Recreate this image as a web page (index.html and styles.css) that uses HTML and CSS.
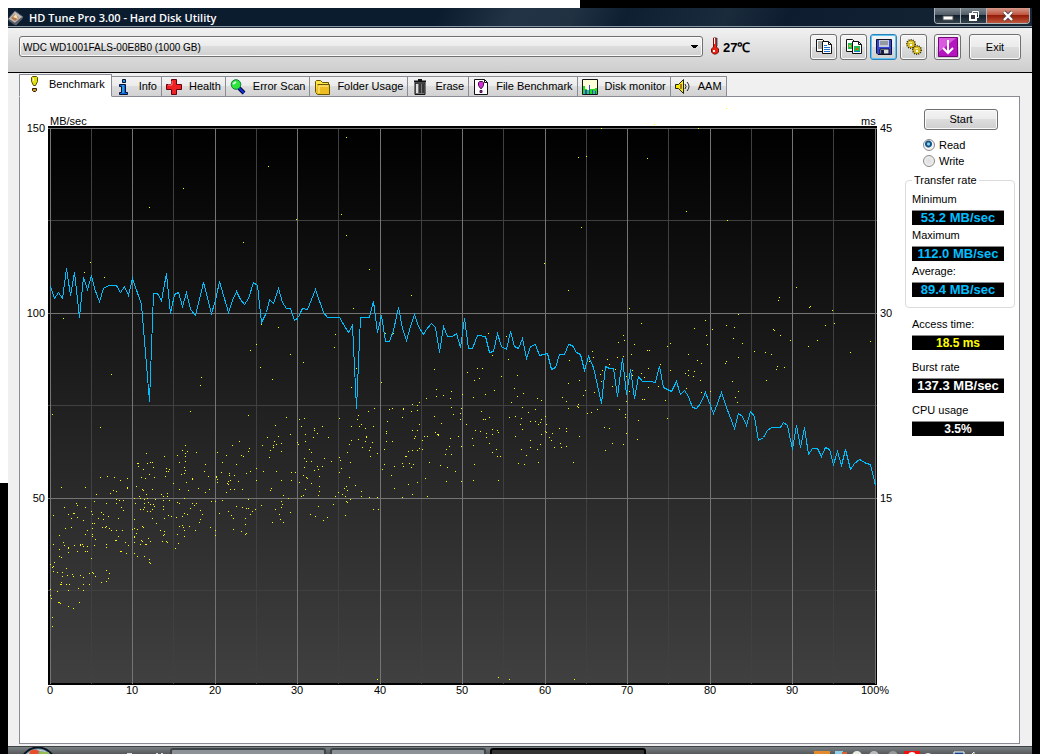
FILE: index.html
```html
<!DOCTYPE html>
<html lang="en">
<head>
<meta charset="utf-8">
<title>HD Tune Pro 3.00 - Hard Disk Utility</title>
<link rel="stylesheet" href="styles.css">
</head>
<body>
<main class="window">
  <header class="titlebar">
    <svg class="app-icon" viewBox="0 0 16 16" aria-hidden="true"><path d="M0 9 7 1 15 7 8 15z" fill="#bcb9bb" stroke="#5c5d67"/><path d="M3 8 7 4 11 8 7 11z" fill="#b47849"/><path d="M5 7 8 4 10 9z" fill="#f7e0b0"/><path d="M1 10 7 14 14 8" fill="none" stroke="#595b64" stroke-width="2"/></svg>
    <h1 class="title">HD Tune Pro 3.00 - Hard Disk Utility</h1>
    <div class="caption-buttons">
      <button class="caption" aria-label="Minimize"><svg viewBox="0 0 14 12"><path d="M2 6h10v4H2z" fill="#fff" stroke="#555"/></svg></button>
      <button class="caption" aria-label="Restore"><svg viewBox="0 0 14 12"><path d="M5.500 1.500h6v6h-6z" fill="none" stroke="#fff"/><path d="M3 4h6v6H3z" fill="#334" stroke="#fff" stroke-width="2"/><path d="M5 6h2v2H5z" fill="#334"/></svg></button>
      <button class="caption close" aria-label="Close"><svg viewBox="0 0 14 12"><path d="M3 2l8 8M11 2l-8 8" stroke="#514047" stroke-width="4"/><path d="M3 2l8 8M11 2l-8 8" stroke="#fff" stroke-width="2.4"/></svg></button>
    </div>
  </header>

  <div class="toolbar">
    <select class="drive" aria-label="Drive"><option>WDC WD1001FALS-00E8B0 (1000 GB)</option></select>
    <svg class="thermo" viewBox="0 0 10 18" aria-hidden="true"><path d="M3.500 1h3v9l2 2v3l-2 2h-3l-2-2v-3l2-2z" fill="#e21" stroke="#711"/><path d="M4 1h1v6H4z" fill="#fff"/><path d="M6 2h2M6 4h2M6 6h2M6 8h2" stroke="#456"/><path d="M3 13h2v2H3z" fill="#fff"/></svg>
    <output class="temp">27℃</output>
    <div class="tools">
      <button class="tool" aria-label="Copy text"><svg viewBox="0 0 18 18"><path d="M1.500 1.500h6l2 2v10h-8z" fill="#fff" stroke="#111"/><path d="M3 4h4M3 6h4M3 8h4M3 10h4" stroke="#555"/><path d="M7.500 3.500h6l3 3v9h-9z" fill="#fff" stroke="#111"/><path d="M13.500 3.500v3h3" fill="none" stroke="#111"/><path d="M9 7.500h3M9 9.500h6M9 11.500h6M9 13.500h6" stroke="#27c"/></svg></button>
      <button class="tool" aria-label="Copy image"><svg viewBox="0 0 18 18"><path d="M1.500 1.500h6l2 2v10h-8z" fill="#fff" stroke="#111"/><path d="M3 5h5v6H3z" fill="#2b5"/><path d="M4 7h2v2H4z" fill="#ea2"/><path d="M7.500 3.500h6l3 3v9h-9z" fill="#fff" stroke="#111"/><path d="M13.500 3.500v3h3" fill="none" stroke="#111"/><path d="M9 8h6v6H9z" fill="#2b5"/><path d="M11 10h2v2h-2z" fill="#e50"/><path d="M9 13.500h6" stroke="#27c"/></svg></button>
      <button class="tool active" aria-label="Save"><svg viewBox="0 0 18 18"><path d="M1.500 1.500h15v15H3l-1.500-1.500z" fill="#34d" stroke="#112"/><path d="M4 2h10v7H4z" fill="#c6cbd2"/><path d="M5 4h8M5 6h8" stroke="#667"/><path d="M5 11h9v5H5z" fill="#ddd" stroke="#112"/><path d="M6 12h3v4H6z" fill="#124"/></svg></button>
      <button class="tool" aria-label="Options"><svg viewBox="0 0 18 18" stroke="#352c00"><circle cx="6" cy="6" r="4" fill="#c9a90f" stroke-width="2" stroke-dasharray="1 1"/><circle cx="12" cy="12" r="4" fill="#c9a90f" stroke-width="2" stroke-dasharray="1 1"/><circle cx="6" cy="6" r="3.500" fill="#d9bd25" stroke="none"/><circle cx="12" cy="12" r="3.500" fill="#d9bd25" stroke="none"/><path d="M4 4.500h3M10 10.500h3" stroke="#f8ea83"/><path d="M5 6h2v2H5zM11 12h2v2h-2z" fill="#fff" stroke="none"/></svg></button>
      <button class="tool minimize-tray" aria-label="Minimize to tray"><svg viewBox="0 0 20 20"><path d="M.500 .500h19v19H.500z" fill="#b416bd" stroke="#700977"/><path d="M1 1h17L1 15z" fill="#d95adf"/><path d="M10 3v13M5 11l5 5 5-5" fill="none" stroke="#fff" stroke-width="2"/></svg></button>
      <button class="exit">Exit</button>
    </div>
  </div>

  <nav class="tabs" role="tablist">
    <button class="tab selected" role="tab" aria-selected="true"><svg viewBox="0 0 16 16"><path d="M6.500 .500h4l1 1v4l-2 4h-2l-2-4v-4z" fill="#e6de15" stroke="#554f00"/><path d="M7 2h1v3H7z" fill="#fff"/><path d="M6.500 12.500h4v2l-1 1h-2l-1-1z" fill="#c93" stroke="#331b00"/></svg>Benchmark</button>
    <button class="tab" role="tab"><svg viewBox="0 0 16 16"><path d="M6.500 .500h3v3h-3z" fill="#29e" stroke="#013"/><path d="M3.500 5.500h6v8h2v2h-8v-2h2v-6h-2z" fill="#16d" stroke="#013"/><path d="M7 6v8" stroke="#4ce"/></svg>Info</button>
    <button class="tab" role="tab"><svg viewBox="0 0 16 16"><path d="M5.500 .500h5v5h5v5h-5v5h-5v-5h-5v-5h5z" fill="#e22" stroke="#601"/><path d="M6 2v4H2" fill="none" stroke="#f88"/></svg>Health</button>
    <button class="tab" role="tab"><svg viewBox="0 0 16 16"><path d="M9 9l5 5" stroke="#003" stroke-width="4"/><path d="M9 9l5 5" stroke="#13d" stroke-width="2"/><circle cx="6" cy="5.500" r="4.800" fill="#2de53b" stroke="#174"/><path d="M3 5l3-2" stroke="#dfd" stroke-width="2"/></svg>Error Scan</button>
    <button class="tab" role="tab"><svg viewBox="0 0 16 16"><path d="M1.500 13V2.500l1-1h4l2 2h6V13" fill="#ffe64b" stroke="#650"/><path d="M3.500 5.500h12v10h-12l-2-2" fill="#eebd22" stroke="#650"/><path d="M5 7h9M5 7v7" stroke="#fff29a"/></svg>Folder Usage</button>
    <button class="tab" role="tab"><svg viewBox="0 0 16 16"><path d="M3 4h10v11.500H3z" fill="#777" stroke="#111"/><path d="M2 2.500h12M6 .500h4" stroke="#111" stroke-width="2"/><path d="M5 5v9" stroke="#ddd" stroke-width="2"/><path d="M8 5v9M11 5v9" stroke="#222" stroke-width="1.500"/></svg>Erase</button>
    <button class="tab" role="tab"><svg viewBox="0 0 16 16"><path d="M1.500 .500h10l3 3v12h-13z" fill="#fff" stroke="#111"/><path d="M11.500 .500v3h3" fill="none" stroke="#111"/><path d="M6.500 2.500h3l1 1v3l-2 3h-1l-2-3v-3z" fill="#d32bd6" stroke="#414"/><path d="M7 11.500h2v2H7z" fill="#d32bd6" stroke="#414"/></svg>File Benchmark</button>
    <button class="tab" role="tab"><svg viewBox="0 0 16 16"><path d="M.500 .500h15v15H.500z" fill="#ffffd7" stroke="#111"/><path d="M1 15V7h2v3h2v1h2v-1h6v-1h2v6z" fill="#2d2"/><path d="M3 15v-4h2v4zM7 15V6h1v9zM10 15v-4h1v4zM13 15v-3h1v3z" fill="#34e"/></svg>Disk monitor</button>
    <button class="tab" role="tab"><svg viewBox="0 0 16 16"><path d="M.500 5.500h3l5-5v14l-5-5h-3z" fill="#f4e811" stroke="#221"/><path d="M6 5v5" stroke="#a71" stroke-width="2"/><path d="M10 5q2 2.500 0 5M12 3q4 4.500 0 9" fill="none" stroke="#222"/></svg>AAM</button>
  </nav>

  <section class="panel">
    <svg class="chart" viewBox="20 97 885 610" role="img" aria-label="Transfer rate and access time">
      <defs><linearGradient id="fade" x1="0" y1="0" x2="0" y2="1"><stop offset="0" stop-color="#000"/><stop offset="1" stop-color="#404040"/></linearGradient></defs>
      <path class="frame" d="M48 126h829v559H48z"/>
      <path d="M50 128h826v555H50z" fill="url(#fade)"/>
      <path class="grid minor" d="M91.500 128v556M173.500 128v556M256.500 128v556M338.500 128v556M421.500 128v556M503.500 128v556M586.500 128v556M668.500 128v556M751.500 128v556M833.500 128v556M48 220.500h829M48 405.500h829M48 590.500h829"/>
      <path class="grid major" d="M50.500 128v556M132.500 128v556M215.500 128v556M297.500 128v556M380.500 128v556M462.500 128v556M545.500 128v556M627.500 128v556M710.500 128v556M792.500 128v556M875.500 128v556M48 128.500h829M48 313.500h829M48 498.500h829"/>
      <polyline class="rate" id="rate"/>
      <path class="access" id="access"/>
      <g class="axis">
        <text x="50" y="125">MB/sec</text><text x="861" y="125">ms</text>
        <g text-anchor="end"><text x="45" y="132">150</text><text x="45" y="317">100</text><text x="45" y="502">50</text></g>
        <text x="880" y="132">45</text><text x="880" y="317">30</text><text x="880" y="502">15</text>
        <g text-anchor="middle"><text x="50" y="694">0</text><text x="132" y="694">10</text><text x="215" y="694">20</text><text x="297" y="694">30</text><text x="380" y="694">40</text><text x="462" y="694">50</text><text x="545" y="694">60</text><text x="627" y="694">70</text><text x="710" y="694">80</text><text x="792" y="694">90</text><text x="875" y="694">100%</text></g>
      </g>
    </svg>
    <aside class="side">
      <button class="start">Start</button>
      <div class="modes">
        <label><input type="radio" name="mode" checked>Read</label>
        <label><input type="radio" name="mode">Write</label>
      </div>
      <fieldset class="rates">
        <legend>Transfer rate</legend>
        <label for="min">Minimum</label><output id="min" class="value">53.2 MB/sec</output>
        <label for="max">Maximum</label><output id="max" class="value">112.0 MB/sec</output>
        <label for="avg">Average:</label><output id="avg" class="value">89.4 MB/sec</output>
      </fieldset>
      <div class="stats">
        <div class="stat"><label for="acc">Access time:</label><output id="acc" class="value yellow">18.5 ms</output></div>
        <div class="stat"><label for="burst">Burst rate</label><output id="burst" class="value white">137.3 MB/sec</output></div>
        <div class="stat"><label for="cpu">CPU usage</label><output id="cpu" class="value white small">3.5%</output></div>
      </div>
    </aside>
  </section>

  <footer class="taskbar">
    <svg class="orb" viewBox="0 0 38 8" aria-hidden="true"><circle cx="19" cy="18" r="17.500" fill="#7e9bae" stroke="#0a1522" stroke-width="2"/><circle cx="19" cy="19" r="16" fill="none" stroke="#c9d8e0"/><path d="M11 4q5-3 9 0l-1 4h-9z" fill="#e5502a"/><path d="M21 4q5 2 9 1l-1 3h-9z" fill="#94bd4a"/></svg>
    <svg class="quick" viewBox="0 0 48 8" aria-hidden="true"><path d="M9 7h5M38 7h2M43 7h2" stroke="#ddd" stroke-width="2"/></svg>
    <div class="task"></div><div class="task"></div><div class="task current"></div>
    <svg class="tray" viewBox="0 0 166 8" aria-hidden="true"><path d="M0 4h16v4H0z" fill="#e38b2c"/><path d="M21 4h8v4h-8z" fill="#8cd0ec"/><path d="M28 5h5v3h-5z" fill="#d76335"/><circle cx="43" cy="9" r="5" fill="#e8efe1"/><circle cx="60" cy="9" r="5" fill="#bbb"/><circle cx="79" cy="9" r="5" fill="#999"/><path d="M90 4h16v4H90z" fill="#e11"/><circle cx="98" cy="9" r="4" fill="#fff"/><circle cx="114" cy="10" r="4" fill="#ddd"/><path d="M140 5h10v4h-10z" fill="#148" stroke="#fff"/><path d="M157 8l3-3v3" fill="none" stroke="#eee"/></svg>
  </footer>
</main>
<script src="chart.js"></script>
</body>
</html>
```

FILE: styles.css
```css
* { box-sizing: border-box; }
body {
  margin: 0;
  padding: 8px 8px 0;
  min-height: 100vh;
  display: flex;
  background: linear-gradient(#fff, #fff) 0 0 / 580px 8px no-repeat,
    linear-gradient(#fff, #fff) 0 0 / 8px 483px no-repeat, #000;
  font: 11px/13px "Liberation Sans", Arial, sans-serif;
  color: #000;
}
button, select, input { font: inherit; color: inherit; margin: 0; }
svg { display: block; }
.window { flex: 1; min-width: 0; display: flex; flex-direction: column; background: #f0f0f0; }

.titlebar {
  height: 20px;
  display: flex;
  align-items: flex-start;
  padding-right: 2px;
  border-bottom: 1px solid #182838;
  box-shadow: inset 0 -1px #8d98a3;
  background: linear-gradient(115deg, #0c1c2f 42%, #223346 49%, #203142 55%, #0e1f32 60%, #1a2b3c 70%, #0d1d2f 76%, #162636);
}
.app-icon { width: 16px; height: 16px; margin: 2px 5px 0 0; }
.title { flex: 1; margin: 0; font: 600 11px/19px "Open Sans", sans-serif; color: #fff; }
.caption-buttons { display: flex; border: 1px solid #aeb6bd; border-top: 0; border-radius: 0 0 4px 4px; overflow: hidden; }
.caption {
  display: flex; align-items: center; justify-content: center;
  width: 26px; height: 15px; padding: 0; border: 0; border-right: 1px solid #aeb6bd;
  background: linear-gradient(#7d8790, #4d5964 48%, #111e2b 50%, #34424e);
}
.caption svg { width: 14px; height: 12px; }
.caption.close { width: 42px; border-right: 0; background: linear-gradient(#d79a8c, #bd513b 48%, #961d08 50%, #c0563c); }

.toolbar {
  height: 45px;
  display: flex;
  align-items: flex-start;
  padding: 6px 11px 0;
  border-bottom: 1px solid #000;
  background: linear-gradient(#f1f1f1, #cdcdcd);
}
.drive, .tool, .exit, .start {
  border: 1px solid #707070;
  border-radius: 3px;
  background: linear-gradient(#f4f4f4, #ebebeb 48%, #dddddd 50%, #cfcfcf);
  box-shadow: inset 0 0 0 1px #fafafa;
}
.drive {
  appearance: none;
  flex: 1; min-width: 0; height: 21px; margin-top: 2px; padding: 1px 20px 0 3px;
  font-size: 10px;
  background: conic-gradient(from -45deg at 50% 100%, #000 90deg, transparent 0) right 4px center / 8px 4px no-repeat,
    linear-gradient(#f4f4f4, #ebebeb 48%, #dddddd 50%, #cfcfcf);
}
.thermo { width: 10px; height: 18px; margin: 3px 2px 0 7px; }
.temp { width: 88px; padding-left: 1px; font-size: 13px; font-weight: bold; line-height: 27px; }
.tools { display: flex; gap: 3px; }
.tool { width: 27px; height: 26px; padding: 0; display: flex; align-items: center; justify-content: center; }
.tool svg { width: 18px; height: 18px; }
.tool.active { border-color: #2d7fb8; box-shadow: inset 0 0 0 1px #5cc5f4; }
.tool.minimize-tray { margin-left: 4px; }
.tool.minimize-tray svg { width: 20px; height: 20px; }
.exit { width: 52px; height: 26px; margin-left: 5px; padding: 0; }

.tabs { display: flex; align-items: flex-end; padding: 1px 11px 0; }
.tab {
  display: flex; align-items: center; gap: 7px;
  height: 21px; padding: 0 4px; margin-bottom: -1px;
  border: 1px solid #898c95; border-left-width: 0;
  white-space: nowrap;
  background: linear-gradient(#f3f3f3, #ebebeb 48%, #dddddd 50%, #d2d2d2);
}
.tab svg { width: 16px; height: 16px; }
.tab.selected { height: 23px; padding: 0 6px 3px; border-left-width: 1px; border-bottom-color: #fff; background: #fff; z-index: 1; }

.panel {
  flex: 1;
  display: flex;
  align-items: flex-start;
  margin: 0 12px 2px 11px;
  padding-right: 4px;
  border: 1px solid #898c95;
  background: #fff;
}
.chart { flex: 1; min-width: 0; }
.frame { fill: #000; }
.grid { fill: none; shape-rendering: crispEdges; }
.minor { stroke: #404040; }
.major { stroke: #747474; }
.rate { fill: none; stroke: #00bfff; shape-rendering: crispEdges; }
.access { fill: #ff0; shape-rendering: crispEdges; }

.side { width: 110px; padding-top: 12px; }
.start { display: block; width: 74px; height: 21px; margin-left: 19px; padding: 0; }
.modes { margin: 7px 0 0 18px; }
.modes label { display: flex; align-items: center; gap: 4px; height: 16px; }
.modes input {
  appearance: none; width: 12px; height: 12px; border: 1px solid #8a8a8a; border-radius: 50%;
  background: radial-gradient(#ddd, #f4f4f4);
}
.modes input:checked { background: radial-gradient(circle at 45% 40%, #8cd6f5 0 1px, #155586 2px 3px, #f4f4f4 4px); }
.rates { margin: 5px 0 0; padding: 5px 10px 7px 6px; border: 1px solid #dcdcdc; border-radius: 4px; min-width: 0; }
.rates legend { padding: 0 2px; }
.rates label, .stat label { display: block; height: 18px; line-height: 15px; }
.value {
  display: block; height: 15px; margin-bottom: 3px; border-top: 1px solid #888;
  background: #000; color: #00bfff; text-align: center; font-size: 13px; font-weight: bold; line-height: 14px;
}
.value.yellow { color: #ff0; font-size: 12px; }
.value.white { color: #fff; }
.value.small { font-size: 12px; }
.stats { display: flex; flex-direction: column; gap: 7px; padding: 9px 11px 0 7px; }

.taskbar {
  flex: none; height: 8px; overflow: hidden; display: flex; align-items: flex-start;
  padding: 0 52px 0 11px; border-top: 1px solid #3d4344;
  background: linear-gradient(#7a8183, #56595b);
}
.orb { width: 38px; height: 8px; flex: none; }
.quick { width: 48px; height: 8px; margin: 0 4px 0 61px; flex: none; }
.task { width: 156px; height: 20px; margin: 1px 4px 0 0; border: 2px solid #3f4446; border-radius: 3px; background: #8c9298; flex: none; }
.task.current { border-color: #000; background: #333; }
.tray { width: 166px; height: 8px; margin-left: auto; flex: none; }
```

FILE: chart.js
```js
// Samples are stored in thirds of a chart unit, relative to an origin per block.
const decode = (ox, oy, text) => text.trim().split(/\s+/).map((pair) => {
  const [x, y] = pair.split(",").map(Number);
  return [ox + Math.floor(x / 3), oy + Math.floor(y / 3)];
});

const rate = [
  ...decode(30, 250, `61,108 73,146 85,127 97,144 109,55 122,136 133,68 148,202 160,82 172,118 184,77 194,115 208,153 220,115
    235,107 258,107 271,127 283,109 295,136 307,86 334,162 358,454 371,129 382,130 395,150 409,70 422,190 433,132 446,127
    458,169 469,127 482,178 496,196 520,97 544,190 556,150 568,94 595,188 607,150 619,124 631,148 644,163 656,146 670,97
    682,107 694,217 708,188 718,148 731,160 745,115 757,157 769,175 781,176 794,211 805,202`),
  ...decode(300, 250, `1,188 8,175 22,178 46,119 70,186 82,202 118,203 145,247 157,227 169,475 182,202 208,202 220,154 232,247
    244,196 256,274 268,274 280,240 295,172 307,235 319,271 331,230 343,193 355,230 370,253 380,238 394,220 406,232 418,307
    430,230 442,259 458,259 469,250 482,292 493,205 505,295 517,295 532,256 556,259 569,307 580,304 592,250 604,290 619,298
    631,244 643,288 656,295 667,266 680,325 691,290 705,283 719,316 741,311 754,357 766,351 778,314 793,313 806,283 816,286
    830,308 840,313 854,361 865,320 880,352`),
  ...decode(590, 300, `34,310 47,199 58,205 71,206 82,290 97,175 109,283 122,208 133,295 146,230 157,244 180,245 195,248
    208,199 220,262 243,274 259,244 271,283 284,271 295,289 307,321 319,325 331,310 346,278 370,340 382,310 394,278 410,321
    433,385 445,340 457,349 469,376 482,334 493,350 505,421 520,412 532,391 544,382 570,382 580,367 592,377 607,447 619,377
    631,442 643,382 656,463 667,445 681,445 694,469 707,442 718,447 730,493 742,454 754,496 766,448 781,508 793,490 808,478
    829,490 841,493 856,556`),
];

const access = [
  [149,207],[183,188],[268,166],[346,137],[341,214],[346,235],[296,219],[243,242],[578,157],[586,156],[647,158],
  [581,227],[686,211],[727,220],[726,108],[654,124],[601,128],[698,128],[779,297],[796,287],[100,427],[275,425],
  ...decode(30, 250, `181,37 163,67 223,82 100,205 244,373 67,493 514,382 511,406 481,484 655,496 661,301 679,283 694,223
    691,352 727,388 745,232 781,313 820,337 769,502 808,508 823,505`),
  ...decode(300, 250, `208,58 160,175 106,253 103,292 10,337 169,355 154,412 244,397 334,136 256,250 280,250 403,358 409,418
    409,439 379,445 430,436 454,424 451,445 487,433 502,367 523,391 532,355 547,355 538,385 520,442 556,433 577,316
    565,250 619,259 625,328 604,379 583,421 652,376 643,415 652,439 670,430 634,457 712,445 724,451 733,40 805,121
    808,331 805,400 838,391 856,421 850,436 787,442 799,454 877,304 880,322 868,334 883,427`),
  ...decode(590, 300, `118,25 154,70 100,106 103,121 85,127 133,133 7,154 10,172 82,172 100,169 124,163 172,151 178,151
    52,178 58,193 37,211 31,223 34,244 76,208 67,259 13,277 109,229 127,211 127,226 154,220 163,232 175,205 175,262
    118,274 157,298 163,298 109,304 22,328 4,337 88,328 106,343 106,352 145,361 43,382 58,385 109,400 142,418 67,430
    100,433 46,451 232,139 241,130 295,163 313,85 346,61 349,106 352,133 367,88 322,181 334,190 295,211 286,220 295,226
    313,214 310,229 331,241 241,211 211,193 205,259 226,301 232,355 289,265 334,277 361,274 409,76 433,82 430,115 457,130
    409,184 406,190 445,172 445,43 427,244 436,292 445,274 442,307 493,154 526,157 544,163 550,88 553,91 571,106 562,199
    559,208 583,202 529,241 601,121 565,1 661,19 658,22 727,31 706,76 733,70 682,121 655,139 781,157 841,124`),
  ...decode(30, 430, `94,172 166,172 211,142 232,139 253,142 271,151 292,145 292,172 292,175 259,184 250,181 241,190 199,193
    193,214 229,220 259,208 268,211 280,211 259,220 274,232 280,241 70,256 103,232 115,253 130,250 133,250 142,226 139,220
    166,232 142,262 124,265 160,271 184,244 187,253 220,253 214,247 205,265 220,268 235,259 265,265 193,280 187,280 187,295
    229,289 226,292 217,292 238,295 244,301 259,301 277,301 106,295 124,292 172,301 166,313 187,313 88,316 100,337 103,346
    70,343 115,352 115,355 115,367 133,346 151,343 151,346 157,343 160,349 172,349 142,364 166,364 172,364 193,346 196,328
    187,319 229,343 229,352 256,331 259,331 265,319 286,337 295,346 271,364 274,364 289,370 88,358 88,379 94,382 184,385
    61,403 73,397 70,409 67,412 70,424 82,427 97,427 97,439 112,436 109,415 127,433 130,439 151,436 160,442 187,427
    190,430 196,439 178,430 229,421 238,430 235,445 229,454 214,457 178,463 160,463 145,475 160,481 115,481 82,484
    109,463 118,463 94,457 91,463 94,463 61,478 61,496 64,505 85,517 88,517 91,520 148,517 115,529 130,535 67,562 67,589
    349,70 322,100 325,100 325,109 352,100 361,97 367,97 370,112 340,118 358,133 334,142 346,145 373,142 319,169
    337,178 340,181 367,178 403,79 409,115 409,124 415,124 418,118 406,139 394,193 400,199 400,211 412,190 412,199 418,211
    400,229 400,238 349,193 352,205 328,199 331,205 313,205 316,220 343,208 343,220 355,217 361,223 370,223 373,229
    343,232 340,238 352,244 361,244 367,238 376,208 331,238 403,265 415,256 424,259 367,265 379,280 313,268 322,298
    313,295 307,298 319,310 313,319 313,322 337,289 340,292 355,325 334,331 337,334 331,343 346,343 349,343 361,334
    313,337 391,301 403,304 403,313 400,316 397,334 409,334 412,337 313,370 322,379 343,379 358,388 358,397 361,400
    442,76 457,61 466,46 466,70 466,79 472,64 499,67 448,97 466,94 463,112 466,121 463,130 454,133 430,160 469,157
    487,145 487,148 475,181 448,178 463,205 442,217 448,220 487,220 499,220 493,226 481,235 511,241 517,253 511,268
    508,277 472,253 463,250 457,259 439,262 448,289 457,286 460,292 463,301 478,289 496,301 463,319 442,313 445,340 436,355
    526,103 523,124 535,139 505,175 538,178 526,187 544,214 556,214 541,292 556,301 556,316 562,67 559,139 559,142
    562,148 562,157 577,97 589,76 607,46 628,34 634,76 640,79 655,64 658,55 619,103 574,127 598,130 598,136 613,136
    595,154 592,160 595,163 601,151 625,154 601,178 613,178 589,187 637,178 649,130 661,124 679,115 679,151 577,211
    568,250 595,244 604,256 610,265 610,298 619,229 637,232 649,235 655,235 655,208 667,244 661,253 676,238 646,265
    646,283 649,310 646,313 634,304 694,226 697,46 712,22 745,19 733,34 730,46 739,43 754,40 754,64 721,61 718,82 730,52
    781,13 802,37 805,43 700,124 739,124 754,151 724,175 721,181 784,127 796,127 784,151 760,196 754,214 775,205 754,232
    757,223 736,238 781,247 748,253 751,268 760,277 727,277`),
  ...decode(290, 380, `274,7 184,22 28,118 43,115 34,139 97,139 73,145 73,151 82,160 46,163 70,172 115,172 22,187 25,193
    46,184 58,208 64,217 43,235 49,244 64,244 103,235 124,244 43,262 82,259 97,259 85,268 73,271 40,286 49,292 52,295
    28,307 64,310 88,289 88,319 88,334 85,346 46,328 34,349 40,346 85,379 61,403 76,409 112,412 100,421 130,373
    148,115 205,106 202,118 235,94 253,85 184,139 208,139 214,133 226,145 250,139 229,169 229,172 226,184 205,178 184,181
    178,193 247,187 241,202 238,211 241,229 217,202 262,220 172,217 148,232 151,241 181,247 154,265 148,277 178,292
    196,316 169,319 163,325 172,331 145,337 157,343 166,349 136,349 214,334 214,349 238,352 262,352 181,358 169,364
    172,367 250,388 265,388 166,406 298,88 307,85 340,85 340,88 337,112 364,94 367,73 388,67 382,76 382,91 292,124
    289,154 289,160 289,184 307,184 388,133 367,151 382,151 376,169 373,175 283,208 355,214 367,211 382,211 388,205
    346,229 349,229 283,253 277,268 313,259 337,250 340,259 358,250 370,253 364,262 304,286 382,307 355,313 313,325
    367,343 337,352 412,349 484,82 490,103 511,100 514,85 511,118 433,109 454,130 436,157 442,163 445,163 445,166
    403,169 412,169 397,181 397,208 481,175 505,169 478,199 514,199 469,208 466,223 484,223 418,247 451,256 472,262
    496,274 406,295 469,304 514,304 574,94 580,118 586,118 598,112 529,133 556,151 571,154 589,160 607,148 622,151
    625,157 607,163 589,172 547,175 598,190 550,196 619,208 607,217 622,229 631,229 553,253 550,301 625,301
    697,82 736,88 715,97 658,112 676,109 694,115 721,124 736,124 691,133 751,127 754,118 745,133 766,109 769,133
    697,148 754,163 676,169 721,181 751,193 721,202 742,208 694,208 709,226 685,250 703,253 745,247 766,154 769,157
    787,160 808,145 829,145 829,154 778,172 784,181 811,190 793,202 814,202 829,199 868,169 850,247 862,79 865,73
    865,82 835,85 892,100 550,52 586,43 613,31 553,1`),
  ...decode(340, 670, "112,28 475,22 508,28 703,28"),
];

document.getElementById("rate").setAttribute("points", rate.map(([x, y]) => `${x + 0.5},${y + 0.5}`).join(" "));
document.getElementById("access").setAttribute("d", access.map(([x, y]) => `M${x} ${y}h1v1h-1z`).join(""));
```
